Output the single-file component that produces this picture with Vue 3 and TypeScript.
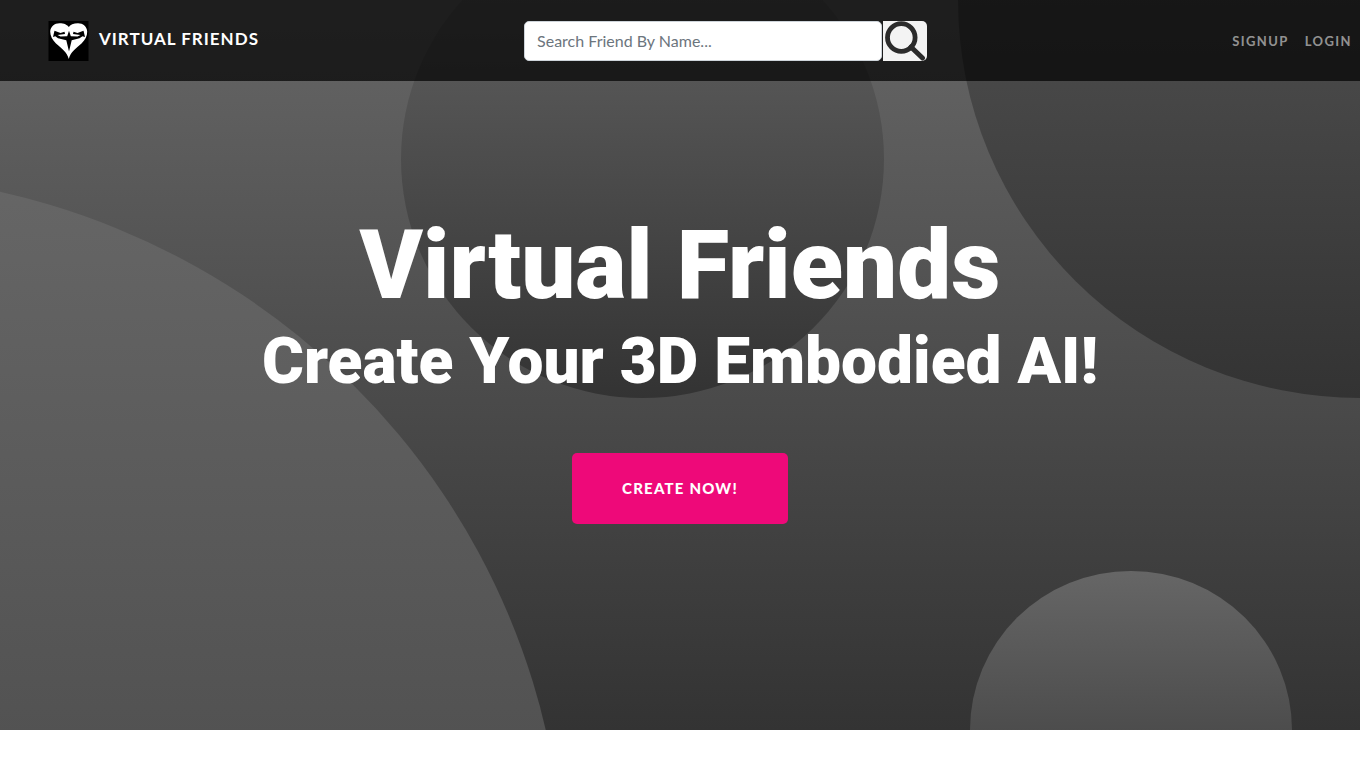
<script setup lang="ts">
import { ref } from 'vue'

const query = ref('')
const circles: string[] = ['lower-left', 'upper-right', 'lower-right', 'upper-middle']
const links: { label: string; href: string }[] = [
  { label: 'Signup', href: '#signup' },
  { label: 'Login', href: '#login' },
]
</script>

<template>
  <header class="hero">
    <div v-for="name in circles" :key="name" class="circle" :class="name"></div>

    <nav class="navbar">
      <a class="brand" href="#">
        <svg class="logo" viewBox="0 0 40 40" aria-hidden="true">
          <rect width="40" height="40" fill="#000" />
          <path
            fill="#fff"
            d="M20.300 38C18.500 31 13 27.500 7.500 22.500C4 19 1.700 15 1.700 10.500C2 5.500 6 2.200 11 2.200C15.500 2.200 19 3.800 20.300 6C21.600 3.800 25 2.200 29.500 2.200C34.500 2.200 38.500 5.500 38.700 10.500C38.900 15 36.500 19 33 22.500C27.500 27.500 22 31 20.300 38Z"
          />
          <path
            fill="#000"
            d="M20.500 9.800L22.300 15.200L29 15.600L32 14L24.500 13L25 10.800L29 12L35 9.800L36.500 16L34 15.200L31 17.300L23.200 19.200L20.500 30.500L17.800 19.200L9.500 17.300L6.800 15.200L4.500 16L6 9.800L12 12L16 10.800L16.500 13L9 14L12 15.600L18.700 15.200Z"
          />
        </svg>
        <span>Virtual Friends</span>
      </a>

      <form class="search" role="search" @submit.prevent>
        <input
          v-model="query"
          class="search-input"
          type="search"
          aria-label="Search friend by name"
          placeholder="Search Friend By Name..."
        />
        <button class="search-button" type="submit" aria-label="Search">
          <svg viewBox="0 0 44 40" aria-hidden="true">
            <circle cx="18.300" cy="16.500" r="13.800" fill="none" stroke="#2b2b2b" stroke-width="4.800" />
            <path d="M28 26L39.500 37" fill="none" stroke="#2b2b2b" stroke-width="5" stroke-linecap="round" />
          </svg>
        </button>
      </form>

      <ul class="links">
        <li v-for="link in links" :key="link.label">
          <a :href="link.href">{{ link.label }}</a>
        </li>
      </ul>
    </nav>

    <div class="content">
      <h1>Virtual Friends</h1>
      <h2>Create Your 3D Embodied AI!</h2>
      <button class="create" type="button">Create Now!</button>
    </div>
  </header>
</template>

<style>
body {
  margin: 0;
  background: #fff;
}
</style>

<style scoped>
.hero {
  position: relative;
  overflow: hidden;
  font-family: Lato, 'Open Sans', sans-serif;
  color: #fff;
  background: linear-gradient(#666, #333);
}

.circle {
  position: absolute;
  border-radius: 50%;
  background: linear-gradient(#666, #333);
}

.lower-left {
  width: 1449px;
  height: 1431px;
  left: -885px;
  bottom: -875px;
}

.upper-right {
  width: 805px;
  height: 796px;
  top: -398px;
  right: -403px;
}

.lower-right {
  width: 322px;
  height: 318px;
  bottom: -159px;
  right: 5%;
}

.upper-middle {
  width: 483px;
  height: 478px;
  top: -80px;
  right: 35%;
}

.navbar {
  position: relative;
  display: flex;
  align-items: center;
  justify-content: space-between;
  min-height: 81px;
  padding: 0 8px 0 48px;
  box-sizing: border-box;
  background: rgba(0, 0, 0, 0.7);
}

.brand {
  display: flex;
  align-items: center;
  gap: 10px;
  color: #fff;
  font-size: 17px;
  font-weight: 700;
  line-height: 24px;
  letter-spacing: 1px;
  text-transform: uppercase;
  text-decoration: none;
}

.brand span {
  padding-bottom: 4px;
}

.logo {
  width: 41px;
  height: 40px;
}

.search {
  display: flex;
  gap: 1px;
  margin-right: 40px;
}

.search-input {
  width: 358px;
  height: 40px;
  box-sizing: border-box;
  padding: 6px 12px;
  border: 1px solid #ced4da;
  border-radius: 5px;
  background: #fff;
  color: #495057;
  font: 400 16px/24px Lato, 'Open Sans', sans-serif;
  appearance: none;
  outline: none;
}

.search-input::placeholder {
  color: #6c757d;
  opacity: 1;
}

.search-button {
  width: 44px;
  height: 40px;
  padding: 0;
  overflow: hidden;
  border: 0;
  border-radius: 0 5px 5px 0;
  background: #f3f3f3;
  cursor: pointer;
}

.search-button svg {
  display: block;
  width: 100%;
  height: 100%;
}

.links {
  display: flex;
  gap: 16px;
  margin: 0;
  padding: 0;
  list-style: none;
}

.links a {
  color: rgba(255, 255, 255, 0.55);
  font-size: 13px;
  font-weight: 700;
  line-height: 24px;
  letter-spacing: 1.4px;
  text-transform: uppercase;
  text-decoration: none;
}

.content {
  position: relative;
  display: flex;
  flex-direction: column;
  align-items: center;
  padding: 128px 16px 206px;
  text-align: center;
}

h1,
h2 {
  margin: 0;
  font-family: Roboto, 'Open Sans', sans-serif;
  font-weight: 900;
}

h1 {
  font-size: 96px;
  line-height: 112px;
}

h2 {
  font-size: 64px;
  line-height: 82px;
}

.create {
  margin-top: 50px;
  padding: 23px 50px 24px;
  border: 0;
  border-radius: 5px;
  background: #ee0979;
  color: #fff;
  font: 900 15px/24px Lato, 'Open Sans', sans-serif;
  letter-spacing: 1.2px;
  text-transform: uppercase;
  cursor: pointer;
}
</style>
